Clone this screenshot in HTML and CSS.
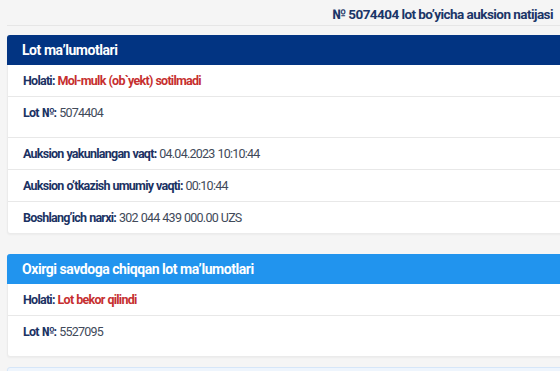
FILE: index.html
```html
<!DOCTYPE html>
<html lang="uz">
<head>
  <meta charset="UTF-8">
  <title>Auksion natijasi</title>
  <link rel="stylesheet" href="styles.css">
</head>
<body>

<div class="page">

  <div class="title">№ 5074404 lot bo’yicha auksion natijasi</div>

  <!-- LOT MA'LUMOTLARI -->
  <div class="card">
    <div class="card-head dark">Lot ma’lumotlari</div>
    <div class="row"><b>Holati:</b> <span class="red">Mol-mulk (ob`yekt) sotilmadi</span></div>
    <div class="row tall"><b>Lot №:</b> 5074404</div>
    <div class="row"><b>Auksion yakunlangan vaqt:</b> 04.04.2023 10:10:44</div>
    <div class="row"><b>Auksion o’tkazish umumiy vaqti:</b> 00:10:44</div>
    <div class="row"><b>Boshlang’ich narxi:</b> 302 044 439 000.00 UZS</div>
  </div>

  <!-- OXIRGI SAVDO -->
  <div class="card">
    <div class="card-head light">Oxirgi savdoga chiqqan lot ma’lumotlari</div>
    <div class="row"><b>Holati:</b> <span class="red">Lot bekor qilindi</span></div>
    <div class="row tall"><b>Lot №:</b> 5527095</div>
  </div>

  <div class="card info"></div>

</div>

</body>
</html>
```

FILE: styles.css
```css
body {
  margin: 0;
  background: #f5f5f5;
  font-family: Roboto, "Liberation Sans", Arial, sans-serif;
  overflow: hidden;
}

.page {
  padding-left: 7px;
}

.title {
  text-align: right;
  font-size: 13.5px;
  letter-spacing: -0.55px;
  font-weight: bold;
  color: #1b3668;
  padding: 6px 7px 0 0;
  height: 19px;
  border-bottom: 1px solid #e6e6e6;
}

.card {
  background: #fff;
  border: 1px solid #ebebeb;
  border-radius: 3px;
  margin-top: 9px;
  width: 580px;
  box-shadow: 0 1px 2px rgba(0, 0, 0, 0.04);
}

.card + .card {
  margin-top: 20px;
}

.card-head {
  height: 30px;
  line-height: 30px;
  padding-left: 15px;
  color: #fff;
  font-size: 14px;
  letter-spacing: -0.45px;
  font-weight: bold;
  border-radius: 3px 3px 0 0;
  margin: -1px -1px 0 -1px;
}

.dark { background: #023482; }
.light { background: #2194ee; }

.row {
  height: 31px;
  line-height: 32px;
  padding-left: 15px;
  font-size: 12.5px;
  letter-spacing: -0.75px;
  word-spacing: 0.5px;
  color: #414a5a;
  border-bottom: 1px solid #e8e8e8;
}

.row:last-child {
  border-bottom: none;
}

.row b {
  color: #1b3263;
}

.tall {
  height: 40px;
}

.red {
  color: #c62f2f;
  font-weight: bold;
}

.info {
  height: 30px;
  background: #eef5fd;
  border-color: #d6e6f8;
  margin-top: 10px !important;
}
```
